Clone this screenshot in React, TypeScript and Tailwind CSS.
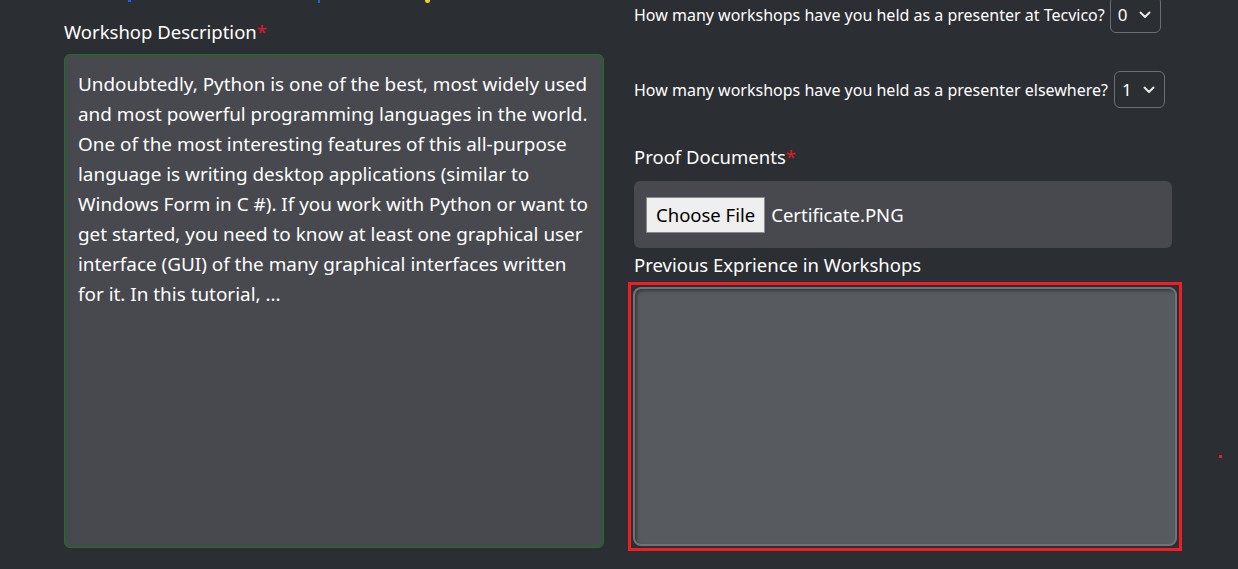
import React from "react";

const lines = [
  "Undoubtedly, Python is one of the best, most widely used",
  "and most powerful programming languages in the world.",
  "One of the most interesting features of this all-purpose",
  "language is writing desktop applications (similar to",
  "Windows Form in C #). If you work with Python or want to",
  "get started, you need to know at least one graphical user",
  "interface (GUI) of the many graphical interfaces written",
  "for it. In this tutorial, ...",
];

function Select({ value }: { value: string }) {
  return (
    <div className="flex h-[37px] w-[51px] items-center justify-between rounded-[6px] border border-[#6b6e73] pl-[7px] pr-[9px] text-[17px] text-white">
      <span>{value}</span>
      <svg width="12" height="8" viewBox="0 0 12 8" fill="none">
        <path d="M1.5 1.5 6 6l4.5-4.5" stroke="#e6e6e6" strokeWidth="2" strokeLinecap="round" strokeLinejoin="round" />
      </svg>
    </div>
  );
}

export default function App() {
  return (
    <div
      className="h-[569px] w-[1238px] overflow-hidden bg-[#2b2e33] text-white"
      style={{ fontFamily: '"Noto Sans", "Open Sans", sans-serif' }}
    >
      <div className="flex h-[3px] items-start pl-[128px]">
        <span className="h-[2px] w-[3px] bg-[#1f5fe0]" />
        <span className="ml-[187px] h-[3px] w-[2px] bg-[#1f5fe0]" />
        <span className="ml-[105px] h-[3px] w-[5px] rounded-b bg-[#f0d020]" />
      </div>
      <div className="grid grid-cols-[540px_538px] gap-x-[30px] pl-[64px]">
        <div className="flex flex-col">
          <div className="mt-[17px] h-[34px] text-[18.5px] leading-[24px]">
            Workshop Description<span className="text-[#e0192b]">*</span>
          </div>
          <div className="h-[494px] rounded-[6px] border border-[#137a13] bg-[#47494f] px-[13px] pt-[14px] text-[18.9px] leading-[30px]">
            {lines.map((l, i) => (
              <div key={i} className="whitespace-nowrap">
                {l}
              </div>
            ))}
          </div>
        </div>
        <div className="-mt-[7px] flex flex-col">
          <div className="flex items-center gap-[5px] text-[16px]">
            <span>How many workshops have you held as a presenter at Tecvico?</span>
            <Select value="0" />
          </div>
          <div className="mt-[38px] flex items-center gap-[6px] text-[16px]">
            <span>How many workshops have you held as a presenter elsewhere?</span>
            <Select value="1" />
          </div>
          <div className="mt-[37px] h-[36px] text-[18.5px] leading-[24px]">
            Proof Documents<span className="text-[#e0192b]">*</span>
          </div>
          <div className="flex h-[67px] items-center rounded-[6px] bg-[#47494f] px-[12px]">
            <div className="flex h-[36px] items-center border border-[#8a8a8a] bg-[#efefef] px-[9px] text-[18.5px] text-black">
              Choose File
            </div>
            <span className="ml-[6px] text-[18.5px]">Certificate.PNG</span>
          </div>
          <div className="mt-[5px] h-[29px] text-[18.5px] leading-[24px]">Previous Exprience in Workshops</div>
          <div className="-ml-[6px] h-[269px] w-[554px] border-[3px] border-[#f01d25] p-[2px]">
            <div className="h-full w-full rounded-[8px] border-2 border-[#6f7277] bg-[#575a5f] shadow-[inset_2px_2px_3px_rgba(0,0,0,0.35)]" />
          </div>
        </div>
      </div>
      <div className="-mt-[96px] ml-[1219px] h-[3px] w-[3px] bg-[#ed1c24]" />
    </div>
  );
}
